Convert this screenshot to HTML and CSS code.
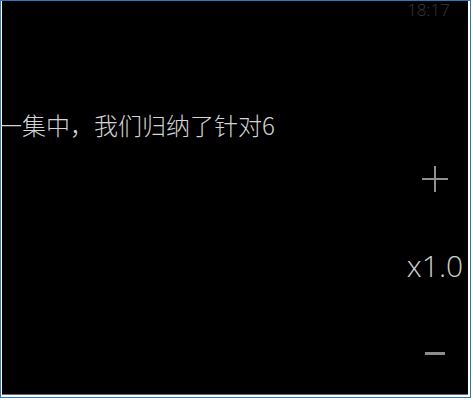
FILE: index.html
```html
<!DOCTYPE html>
<html lang="zh-CN">
<head>
<meta charset="utf-8">
<title>Player</title>
<link rel="stylesheet" href="styles.css">
</head>
<body>
<div class="frame">
  <div class="screen">
    <div class="status"><span class="clock">18:17</span></div>
    <div class="main">
      <div class="caption">一集中，我们归纳了针对6</div>
      <div class="controls">
        <div class="btn plus">
          <svg width="26" height="26" viewBox="0 0 26 26"><path d="M13 0V26M0 13H26" stroke="#8f8f8f" stroke-width="2" fill="none"/></svg>
        </div>
        <div class="speed">x1.0</div>
        <div class="btn minus"><span class="bar"></span></div>
      </div>
    </div>
  </div>
</div>
</body>
</html>
```
FILE: styles.css
```css
html, body {
  margin: 0;
  padding: 0;
  background: #ffffff;
}
.frame {
  box-sizing: border-box;
  width: 471px;
  height: 398px;
  border: 1px solid #2a78c2;
  padding: 0 2px 2px 1px;
  background: #ffffff;
}
.screen {
  box-sizing: border-box;
  height: 100%;
  background: #000000;
  border-bottom: 1px solid #6a6a6a;
  overflow: hidden;
  display: flex;
  flex-direction: column;
}
.status {
  height: 18px;
  display: flex;
  justify-content: flex-end;
  padding-right: 18px;
}
.clock {
  font-family: "Open Sans", "Noto Sans", sans-serif;
  font-weight: 300;
  font-size: 17px;
  line-height: 18px;
  color: #3a3a3a;
}
.main {
  flex: 1;
  display: flex;
}
.caption {
  flex: 1;
  margin-top: 94px;
  margin-left: -4px;
  font-family: "Noto Sans CJK SC", "Noto Sans", sans-serif;
  font-weight: 300;
  font-size: 24px;
  line-height: 24px;
  color: #d4d4d4;
  white-space: nowrap;
  align-self: flex-start;
}
.controls {
  width: 66px;
  display: flex;
  flex-direction: column;
  align-items: center;
}
.btn {
  display: flex;
  align-items: center;
  justify-content: center;
}
.plus {
  margin-top: 147px;
  width: 26px;
  height: 26px;
}
.plus svg {
  display: block;
}
.speed {
  margin-top: 59px;
  font-family: "Open Sans", "Noto Sans", sans-serif;
  font-weight: 300;
  font-size: 30px;
  line-height: 30px;
  color: #cfcfcf;
}
.minus {
  margin-top: 71px;
  width: 20px;
  height: 3px;
}
.bar {
  display: block;
  width: 20px;
  height: 3px;
  background: #8c8c8c;
}
```
